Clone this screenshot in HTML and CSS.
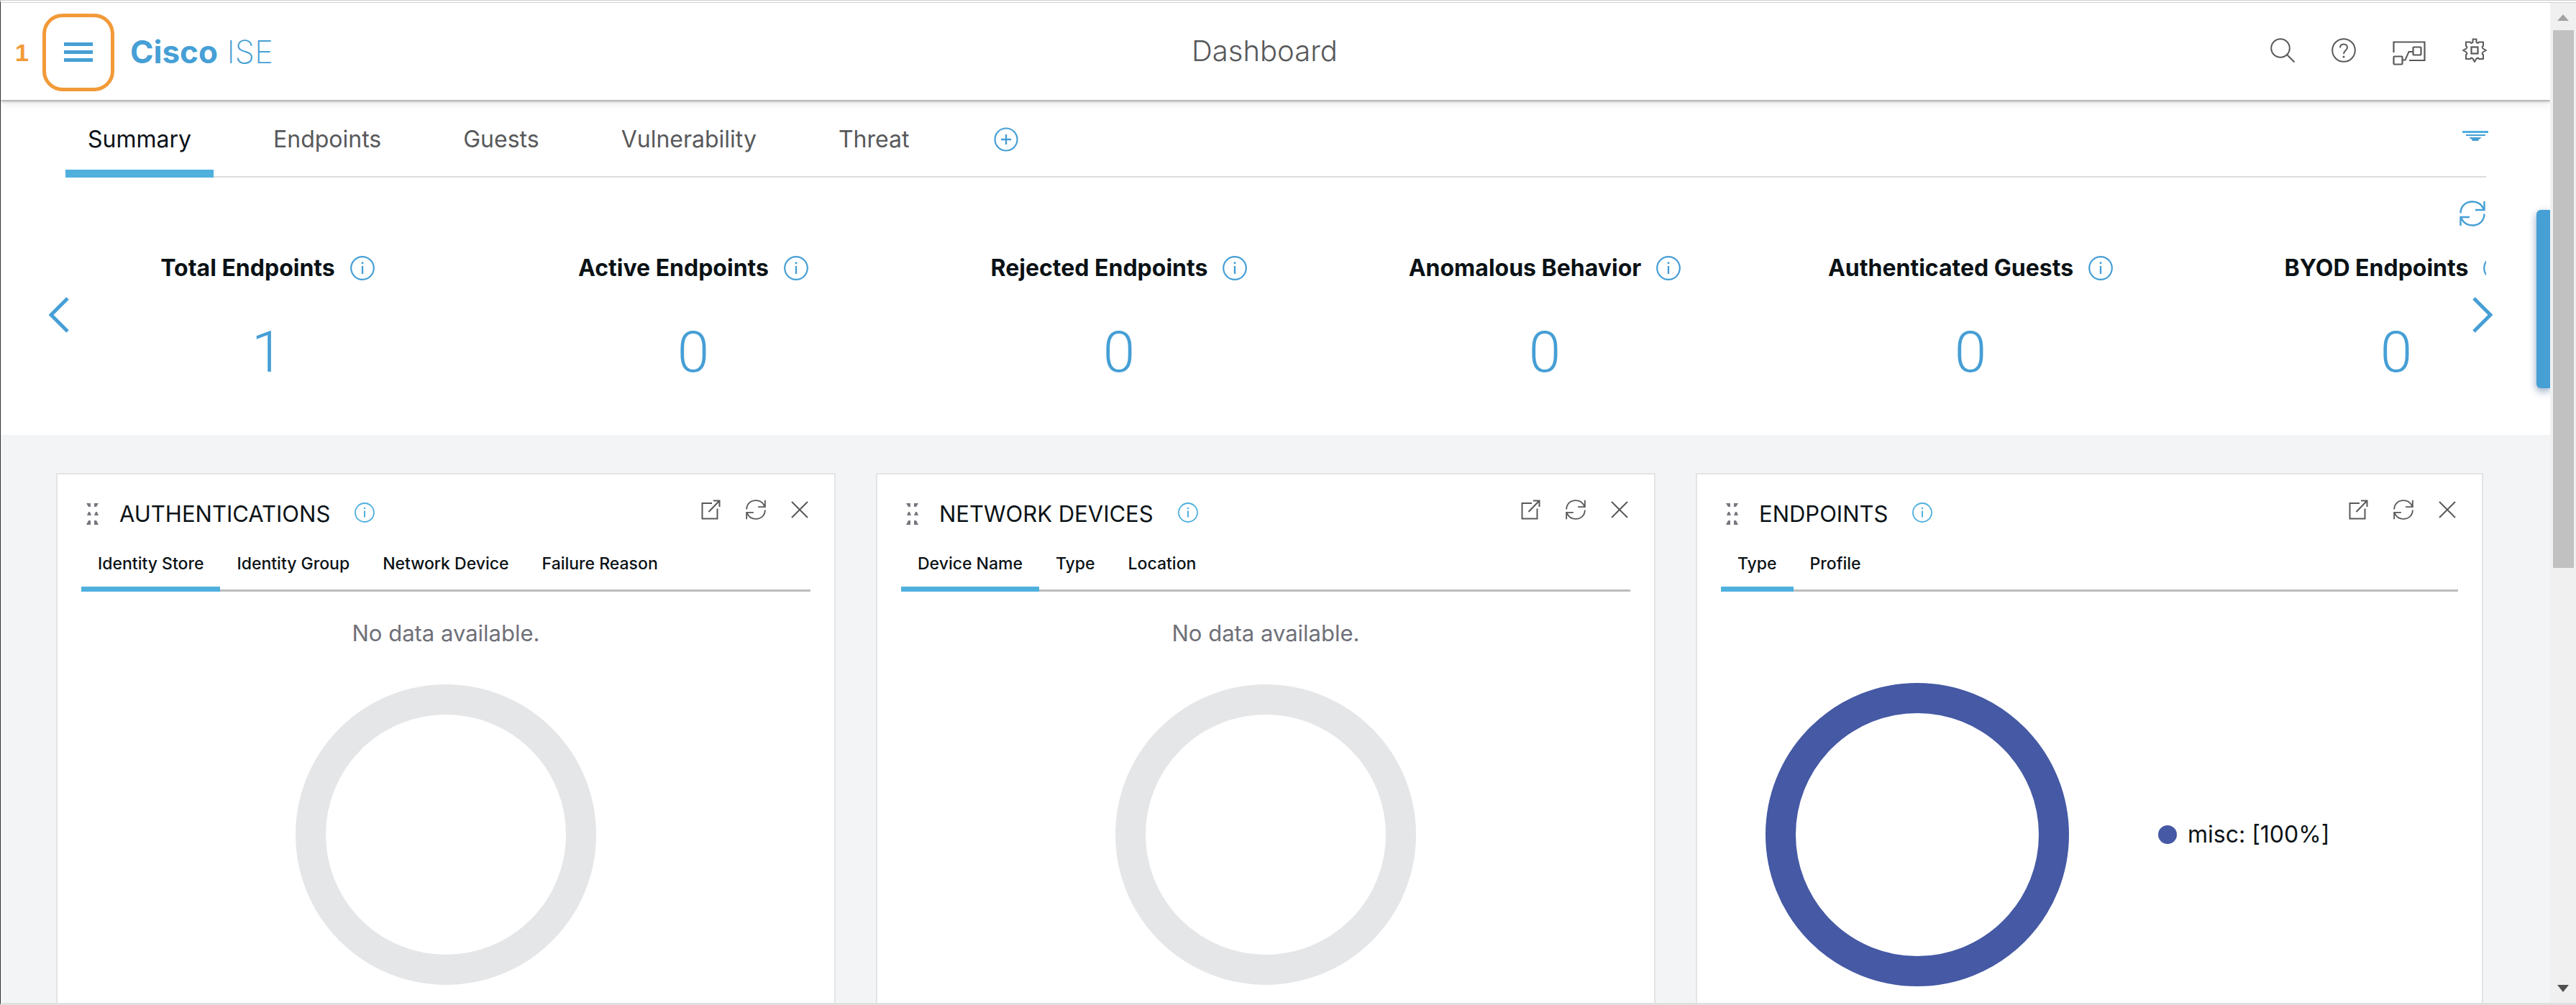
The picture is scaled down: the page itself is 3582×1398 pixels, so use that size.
FILE: index.html
```html
<!DOCTYPE html>
<html lang="en">
<head>
<meta charset="utf-8">
<title>Cisco ISE - Dashboard</title>
<link rel="stylesheet" href="styles.css">
</head>
<body>
<svg class="sprite" aria-hidden="true">
  <symbol id="info" viewBox="0 0 34 34"><circle cx="17" cy="17" r="15.8" fill="none" stroke="currentColor" stroke-width="2.2"/><path d="M17 14v11" stroke="currentColor" stroke-width="2.4"/><circle cx="17" cy="9.8" r="1.5" fill="currentColor"/></symbol>
  <symbol id="refresh" viewBox="0 0 36 36"><path d="M1.5 17.500C1.500 8 8.500 1.500 18 1.500c7 0 12.500 3.500 15.500 10M34.500 1v12H22M34.500 18.500c0 9.500-7 16-16.500 16-7 0-12.500-3.500-15.500-10M1.500 35V23H14" fill="none" stroke="currentColor" stroke-width="2.400"/></symbol>
  <symbol id="open" viewBox="0 0 27 28"><path d="M15 5H1.500v21.500h21V12.500M17 1.500h8.500V10M25 2 10.500 17" fill="none" stroke="currentColor" stroke-width="2"/></symbol>
  <symbol id="close" viewBox="0 0 24 24"><path d="m1 1 22 22M23 1 1 23" stroke="currentColor" stroke-width="2"/></symbol>
  <symbol id="grip" viewBox="0 0 18 32"><path d="M0 1h6v5H3zM11 1h6l-3 5h-3zM1 18l2-5h2l2 5zM11 18l2-5h2l2 5zM0 31l3-6h3v6zM11 31v-6h3l3 6z" fill="currentColor"/></symbol>
</svg>

<div class="window">
  <div class="page">
    <header class="topbar">
      <div class="brand">
        <span class="callout">1</span>
        <button class="menu" aria-label="Menu"><span></span><span></span><span></span></button>
        <a class="logo" href="#"><b>Cisco</b> ISE</a>
      </div>
      <h1 class="page-title">Dashboard</h1>
      <div class="tools">
        <button aria-label="Search"><svg width="34" height="34" viewBox="0 0 34 34"><circle cx="14" cy="14" r="12.800" fill="none" stroke="currentColor" stroke-width="2"/><path d="m23 23 10.500 10.500" stroke="currentColor" stroke-width="2"/></svg></button>
        <button aria-label="Help"><svg width="34" height="34" viewBox="0 0 34 34"><circle cx="17" cy="17" r="15.800" fill="none" stroke="currentColor" stroke-width="2"/><path d="M12 13.500C12 10.500 14 8.500 17 8.500s5 2 5 4.500c0 4-5 4-5 9" fill="none" stroke="currentColor" stroke-width="2"/><circle cx="17" cy="26" r="1.500" fill="currentColor"/></svg></button>
        <button aria-label="Interactive help"><svg width="46" height="42" viewBox="0 -8 46 42"><path d="M1.500 16V1.500h43v25.500H23" fill="none" stroke="currentColor" stroke-width="2.200"/><rect x="28.500" y="8.500" width="11" height="11" rx="1" fill="none" stroke="currentColor" stroke-width="2.200"/><rect x="1.500" y="21.500" width="12" height="11" rx="1" fill="none" stroke="currentColor" stroke-width="2.200"/><path d="M13.500 26.500h4l5-11.500h6" fill="none" stroke="currentColor" stroke-width="2"/></svg></button>
        <button aria-label="Settings"><svg width="34" height="34" viewBox="0 0 34 34"><path d="M14.500 6V1.500h5V6l2.500 1 1-1.500h6V11l-1.500 1 1 2.500L33 17l-4.500 2.500-1 2.500 1.500 1v6h-6l-1-1.500-2.500 1L17 33l-2.500-4.500-2.500-1-1 1.500H5v-6l1.500-1-1-2.500L1 17l4.500-2.500 1-2.500L5 11V5.500h6L12 7z" fill="none" stroke="currentColor" stroke-width="2" stroke-linejoin="round"/><rect x="12.500" y="12.500" width="9" height="9" fill="none" stroke="currentColor" stroke-width="2.200"/></svg></button>
      </div>
    </header>

    <nav class="tabs">
      <button class="tab active">Summary</button>
      <button class="tab">Endpoints</button>
      <button class="tab">Guests</button>
      <button class="tab">Vulnerability</button>
      <button class="tab">Threat</button>
      <button class="add" aria-label="Add dashboard"><svg width="34" height="34" viewBox="0 0 34 34"><circle cx="17" cy="17" r="15.500" fill="none" stroke="currentColor" stroke-width="2.200"/><path d="M17 10v14M10 17h14" stroke="currentColor" stroke-width="2.400"/></svg></button>
      <button class="filter" aria-label="Filter"><svg width="36" height="14" viewBox="0 0 36 14"><path d="M0 0h36v3H0z" fill="#4fb0de"/><path d="M5 5h27v2H5zM9 9h18l-4 3-1 2h-8l-1-2z" fill="#469fd5"/></svg></button>
    </nav>

    <section class="metrics">
      <button class="reload" aria-label="Refresh metrics"><svg width="38" height="36"><use href="#refresh"/></svg></button>
      <div class="track">
        <div class="metric"><h2>Total Endpoints <svg width="34" height="34"><use href="#info"/></svg></h2><a href="#">1</a></div>
        <div class="metric"><h2>Active Endpoints <svg width="34" height="34"><use href="#info"/></svg></h2><a href="#">0</a></div>
        <div class="metric"><h2>Rejected Endpoints <svg width="34" height="34"><use href="#info"/></svg></h2><a href="#">0</a></div>
        <div class="metric"><h2>Anomalous Behavior <svg width="34" height="34"><use href="#info"/></svg></h2><a href="#">0</a></div>
        <div class="metric"><h2>Authenticated Guests <svg width="34" height="34"><use href="#info"/></svg></h2><a href="#">0</a></div>
        <div class="metric"><h2>BYOD Endpoints <svg width="34" height="34"><use href="#info"/></svg></h2><a href="#">0</a></div>
      </div>
      <button class="arrow prev" aria-label="Previous"><svg width="28" height="50" viewBox="0 0 28 50"><path d="M26 2 3 25l23 23" fill="none" stroke="currentColor" stroke-width="5"/></svg></button>
      <button class="arrow next" aria-label="Next"><svg width="28" height="50" viewBox="0 0 28 50"><path d="m2 2 23 23L2 48" fill="none" stroke="currentColor" stroke-width="5"/></svg></button>
      <button class="side-tab" aria-label="Open side panel"></button>
    </section>

    <main class="dashlets">
      <article class="card">
        <header class="card-head">
          <svg class="grip" width="18" height="32"><use href="#grip"/></svg>
          <h3>AUTHENTICATIONS</h3>
          <svg class="hint" width="28" height="28"><use href="#info"/></svg>
          <div class="actions">
            <button aria-label="Detach"><svg width="27" height="28"><use href="#open"/></svg></button>
            <button aria-label="Refresh"><svg width="28" height="28"><use href="#refresh"/></svg></button>
            <button aria-label="Close"><svg width="24" height="24"><use href="#close"/></svg></button>
          </div>
        </header>
        <div class="subtabs"><button class="active">Identity Store</button><button>Identity Group</button><button>Network Device</button><button>Failure Reason</button></div>
        <p class="empty">No data available.</p>
        <div class="donut"></div>
      </article>

      <article class="card">
        <header class="card-head">
          <svg class="grip" width="18" height="32"><use href="#grip"/></svg>
          <h3>NETWORK DEVICES</h3>
          <svg class="hint" width="28" height="28"><use href="#info"/></svg>
          <div class="actions">
            <button aria-label="Detach"><svg width="27" height="28"><use href="#open"/></svg></button>
            <button aria-label="Refresh"><svg width="28" height="28"><use href="#refresh"/></svg></button>
            <button aria-label="Close"><svg width="24" height="24"><use href="#close"/></svg></button>
          </div>
        </header>
        <div class="subtabs"><button class="active">Device Name</button><button>Type</button><button>Location</button></div>
        <p class="empty">No data available.</p>
        <div class="donut"></div>
      </article>

      <article class="card">
        <header class="card-head">
          <svg class="grip" width="18" height="32"><use href="#grip"/></svg>
          <h3>ENDPOINTS</h3>
          <svg class="hint" width="28" height="28"><use href="#info"/></svg>
          <div class="actions">
            <button aria-label="Detach"><svg width="27" height="28"><use href="#open"/></svg></button>
            <button aria-label="Refresh"><svg width="28" height="28"><use href="#refresh"/></svg></button>
            <button aria-label="Close"><svg width="24" height="24"><use href="#close"/></svg></button>
          </div>
        </header>
        <div class="subtabs"><button class="active">Type</button><button>Profile</button></div>
        <div class="chart">
          <div class="donut filled"></div>
          <ul class="legend"><li>misc: [100%]</li></ul>
        </div>
      </article>
    </main>
  </div>

  <div class="scrollbar" aria-hidden="true">
    <svg width="16" height="9" viewBox="0 0 16 9"><path d="M0 9 8 0l8 9z" fill="#a3a3a3"/></svg>
    <div class="thumb"></div>
    <svg class="down" width="16" height="10" viewBox="0 0 16 10"><path d="M0 0h16L8 10z" fill="#505050"/></svg>
  </div>
</div>
</body>
</html>
```

FILE: styles.css
```css
:root {
  --blue: #469fd5;
  --light-blue: #4fb0de;
  --ink: #0b1216;
  --grey: #58595b;
  --sans: Inter, "Liberation Sans", Arial, sans-serif;
}

* { box-sizing: border-box; }

body {
  margin: 0;
  background: #fff;
  color: var(--ink);
  font-family: var(--sans);
}

h1, h2, h3, p, ul { margin: 0; padding: 0; font-weight: 400; }

button {
  margin: 0;
  padding: 0;
  border: 0;
  background: none;
  color: inherit;
  font: inherit;
  cursor: pointer;
}

a { text-decoration: none; }
svg { display: block; flex: none; }
.sprite { position: absolute; width: 0; height: 0; }

.window {
  display: flex;
  height: 100vh;
  overflow: hidden;
  border-top: 4px double #d0d0d0;
  border-bottom: 3px solid #e0e0e0;
  border-left: 1px solid #333;
}

.page { flex: 1; min-width: 0; overflow: hidden; }

/* Top bar */
.topbar {
  position: relative;
  display: grid;
  grid-template-columns: 1fr auto 1fr;
  align-items: center;
  height: 135px;
  padding: 2px 88px 0 58px;
  box-shadow: 0 2px 3px #a8a8a8, 0 4px 12px #e4e4e4;
}

.brand { display: flex; align-items: center; gap: 22px; }

.callout {
  position: absolute;
  left: 20px;
  color: #f29a38;
  font: bold 34px/40px "Liberation Sans", Arial, sans-serif;
}

.menu {
  display: flex;
  flex-direction: column;
  align-items: center;
  justify-content: center;
  gap: 6px;
  width: 100px;
  height: 108px;
  border: 5px solid #f29a38;
  border-radius: 28px;
}

.menu span { width: 40px; height: 5px; background: var(--blue); }

.logo { padding-bottom: 2px; color: var(--blue); font-size: 44px; line-height: 54px; font-weight: 200; }
.logo b { font-weight: 700; }

.page-title { padding-bottom: 4px; color: var(--grey); font-size: 40px; line-height: 48px; font-weight: 300; }

.tools {
  display: flex;
  justify-content: flex-end;
  align-items: center;
  gap: 51px;
  padding-bottom: 6px;
  color: var(--grey);
}

/* Dashboard tabs */
.tabs {
  display: flex;
  align-items: flex-start;
  gap: 52px;
  margin: 0 89px 0 90px;
  padding-top: 35px;
  border-bottom: 2px solid #dcdcdc;
}

.tab {
  margin-bottom: -2px;
  padding: 0 31px 22px;
  border-bottom: 11px solid transparent;
  color: var(--grey);
  font-size: 32px;
  line-height: 40px;
}

.tab.active { border-color: var(--light-blue); color: var(--ink); }
.add { margin: 3px 0 0 35px; color: var(--blue); }
.filter { margin: 8px -3px 0 auto; }

/* Metrics strip */
.metrics { position: relative; padding: 32px 89px 67px 75px; color: var(--blue); }
.reload { display: block; margin-left: auto; }
.track { display: flex; margin-top: 38px; overflow: hidden; }
.metric { flex: 0 0 17.510%; text-align: center; }

.metric h2 {
  display: flex;
  justify-content: center;
  align-items: center;
  gap: 21px;
  font-size: 32px;
  line-height: 40px;
  font-weight: 700;
  color: var(--ink);
  white-space: nowrap;
}

.metric h2 svg { color: var(--blue); }

.metric a {
  display: block;
  margin-top: 49px;
  color: var(--blue);
  font: 300 80px/96px Roboto, sans-serif;
}

.arrow { position: absolute; top: 166px; }
.prev { left: 67px; }
.next { right: 80px; }

.side-tab {
  position: absolute;
  top: 45px;
  right: 0;
  width: 19px;
  height: 248px;
  border-radius: 6px 0 0 6px;
  background: var(--blue);
  box-shadow: 0 4px 12px #8fa3c0;
}

/* Dashlets */
.dashlets {
  display: grid;
  grid-template-columns: 1084fr 1084fr 1095fr;
  gap: 56px;
  padding: 53px 93px 60px 77px;
  background: #f3f4f6;
}

.card {
  padding: 25px 33px 60px;
  border: 2px solid #e3e4e4;
  background: #fff;
}

.card-head { display: flex; align-items: center; height: 60px; padding-left: 7px; }
.card-head h3 { margin-left: 28px; font-size: 31px; line-height: 40px; }
.grip { color: #77787f; }
.hint { margin-left: 34px; margin-bottom: 4px; color: var(--light-blue); }

.actions {
  display: flex;
  align-items: center;
  gap: 35px;
  margin: 0 3px 12px auto;
  color: var(--grey);
}

.subtabs { display: flex; margin-top: 25px; border-bottom: 3px solid #bdbdbd; }

.subtabs button {
  margin-bottom: -3px;
  padding: 0 23px 18px;
  border-bottom: 7px solid transparent;
  font-size: 23px;
  line-height: 28px;
  font-weight: 500;
}

.subtabs .active { border-color: var(--light-blue); }

.empty {
  margin: 38px 0 51px;
  color: #6f7078;
  font-size: 31px;
  line-height: 40px;
  text-align: center;
}

.donut {
  width: 418px;
  height: 418px;
  margin: 0 auto;
  border: 42px solid #e5e6e8;
  border-radius: 50%;
}

.chart { display: flex; align-items: center; gap: 124px; margin-top: 127px; padding-left: 62px; }
.donut.filled { width: 422px; height: 422px; margin: 0; border-color: #4559a4; }

.legend li { display: flex; align-items: center; gap: 15px; font-size: 32px; line-height: 40px; }
.legend li::before { content: ""; width: 26px; height: 26px; border-radius: 50%; background: #4559a4; }

/* Scrollbar */
.scrollbar {
  display: flex;
  flex-direction: column;
  align-items: center;
  width: 36px;
  padding: 16px 2px 15px;
  background: #f0f0f0;
}

.thumb { width: 29px; height: 55%; margin-top: 13px; background: #c1c1c1; }
.down { margin-top: auto; }
```
